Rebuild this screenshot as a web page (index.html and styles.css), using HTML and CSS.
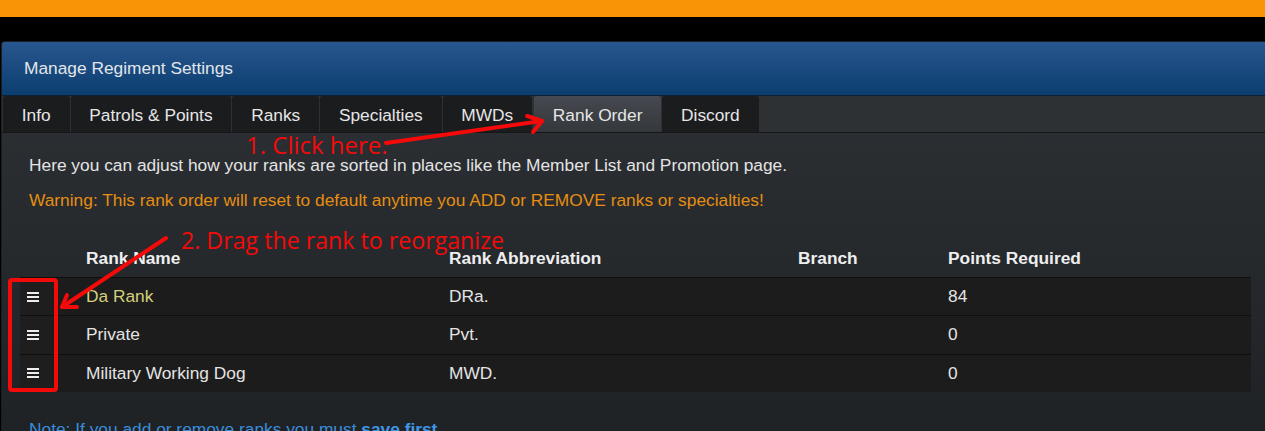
FILE: index.html
```html
<!DOCTYPE html>
<html>
<head>
<meta charset="utf-8">
<link rel="stylesheet" href="styles.css">
</head>
<body>
<div class="topbar"></div>
<div class="panel">
  <div class="panel-heading">Manage Regiment Settings</div>
  <ul class="tabs">
    <li class="tab">Info</li>
    <li class="tab">Patrols &amp; Points</li>
    <li class="tab">Ranks</li>
    <li class="tab">Specialties</li>
    <li class="tab">MWDs</li>
    <li class="tab active">Rank Order</li>
    <li class="tab">Discord</li>
  </ul>
  <div class="panel-body">
    <p class="intro">Here you can adjust how your ranks are sorted in places like the Member List and Promotion page.</p>
    <p class="warning">Warning: This rank order will reset to default anytime you ADD or REMOVE ranks or specialties!</p>
    <table class="ranks">
      <colgroup>
        <col class="c-handle"><col class="c-name"><col class="c-abbr"><col class="c-branch"><col class="c-points">
      </colgroup>
      <thead>
        <tr><th></th><th>Rank Name</th><th>Rank Abbreviation</th><th>Branch</th><th>Points Required</th></tr>
      </thead>
      <tbody>
        <tr>
          <td class="handle"><svg width="12" height="10" viewBox="0 0 12 10"><rect x="0" y="0" width="12" height="2" fill="#eee"/><rect x="0" y="4" width="12" height="2" fill="#eee"/><rect x="0" y="8" width="12" height="2" fill="#eee"/></svg></td>
          <td class="highlight">Da Rank</td><td>DRa.</td><td></td><td>84</td>
        </tr>
        <tr>
          <td class="handle"><svg width="12" height="10" viewBox="0 0 12 10"><rect x="0" y="0" width="12" height="2" fill="#eee"/><rect x="0" y="4" width="12" height="2" fill="#eee"/><rect x="0" y="8" width="12" height="2" fill="#eee"/></svg></td>
          <td>Private</td><td>Pvt.</td><td></td><td>0</td>
        </tr>
        <tr>
          <td class="handle"><svg width="12" height="10" viewBox="0 0 12 10"><rect x="0" y="0" width="12" height="2" fill="#eee"/><rect x="0" y="4" width="12" height="2" fill="#eee"/><rect x="0" y="8" width="12" height="2" fill="#eee"/></svg></td>
          <td>Military Working Dog</td><td>MWD.</td><td></td><td>0</td>
        </tr>
      </tbody>
    </table>
    <p class="note">Note: If you add or remove ranks you must <b>save first</b>.</p>
  </div>
</div>

<svg class="overlay" width="1265" height="431" viewBox="0 0 1265 431">
  <g stroke="#f50a0a" stroke-width="4" stroke-linecap="round" stroke-linejoin="round" fill="none">
    <path d="M386 143 L542 121"/>
    <path d="M527 116 L542 121 L533 132"/>
    <path d="M166 238 L62 307"/>
    <path d="M67 295 L62 307 L77 307"/>
    <rect x="10" y="280" width="46" height="110" rx="2"/>
  </g>
</svg>
<span class="annot a1">1. Click here.</span>
<span class="annot a2">2. Drag the rank to reorganize</span>
</body>
</html>
```

FILE: styles.css
```css
html, body {
  margin: 0;
  padding: 0;
}
body {
  background: #000;
  font-family: "Liberation Sans", Arial, sans-serif;
  font-size: 17.33px;
  color: #ddd;
  position: relative;
  width: 1265px;
  height: 431px;
  overflow: hidden;
}
.topbar {
  height: 17px;
  background: #f99407;
}
.panel {
  margin: 24px 0 0 1px;
  border: 1px solid #1c1f22;
  border-right: none;
  border-radius: 4px 0 0 0;
  background: linear-gradient(#2e3135, #1f2225);
  overflow: hidden;
}
.panel-heading {
  height: 53px;
  line-height: 53px;
  padding-left: 22px;
  background: linear-gradient(#28578f, #0b3d6e);
  border-bottom: 1px solid #0c2036;
  color: #e2e6ea;
}
.tabs {
  list-style: none;
  margin: 0;
  padding: 0 0 0 1px;
  display: flex;
  height: 36px;
  background: #2e3134;
  border-bottom: 1px solid #141618;
}
.tab {
  height: 36px;
  line-height: 38px;
  padding: 0 18.8px;
  margin-right: 1px;
  background: #1b1c1e;
  border-radius: 3px 3px 0 0;
  color: #e6e6e6;
}
.tab.active {
  background: linear-gradient(#464a50, #34383c);
  margin-left: 1px;
}
.panel-body {
  padding: 21px 14px 0 18px;
}
.intro, .warning, .note {
  margin: 0;
  padding-left: 9px;
  line-height: 22px;
}
.intro {
  color: #e4e4e4;
}
.warning {
  margin-top: 13px;
  color: #e58e12;
}
.ranks {
  margin-top: 29px;
  width: 100%;
  border-collapse: collapse;
}
.c-handle { width: 38px; }
.c-name { width: 363px; }
.c-abbr { width: 349px; }
.c-branch { width: 150px; }
.ranks th {
  text-align: left;
  font-weight: bold;
  color: #eee;
  height: 37px;
  padding: 0 0 0 28px;
}
.ranks td {
  height: 37.3px;
  padding: 0 0 0 28px;
  background: #1c1c1c;
  border-top: 1px solid #0f0f0f;
  color: #e4e4e4;
}
.ranks td.handle {
  padding: 0 0 0 7px;
  text-align: left;
  background: #1e1e1e;
  line-height: 0;
}
.ranks td.highlight {
  color: #d3d07c;
}
.note {
  margin-top: 26px;
  color: #3a8ddb;
}
.note b {
  color: #3f96e6;
}
.overlay {
  position: absolute;
  left: 0;
  top: 0;
  pointer-events: none;
}
.annot {
  position: absolute;
  font-family: "Open Sans", "Noto Sans", sans-serif;
  line-height: 24px;
  color: #f50a0a;
  white-space: nowrap;
}
.a1 { left: 246px; top: 133px; font-size: 24px; }
.a2 { left: 181px; top: 228px; font-size: 23.2px; }
```
